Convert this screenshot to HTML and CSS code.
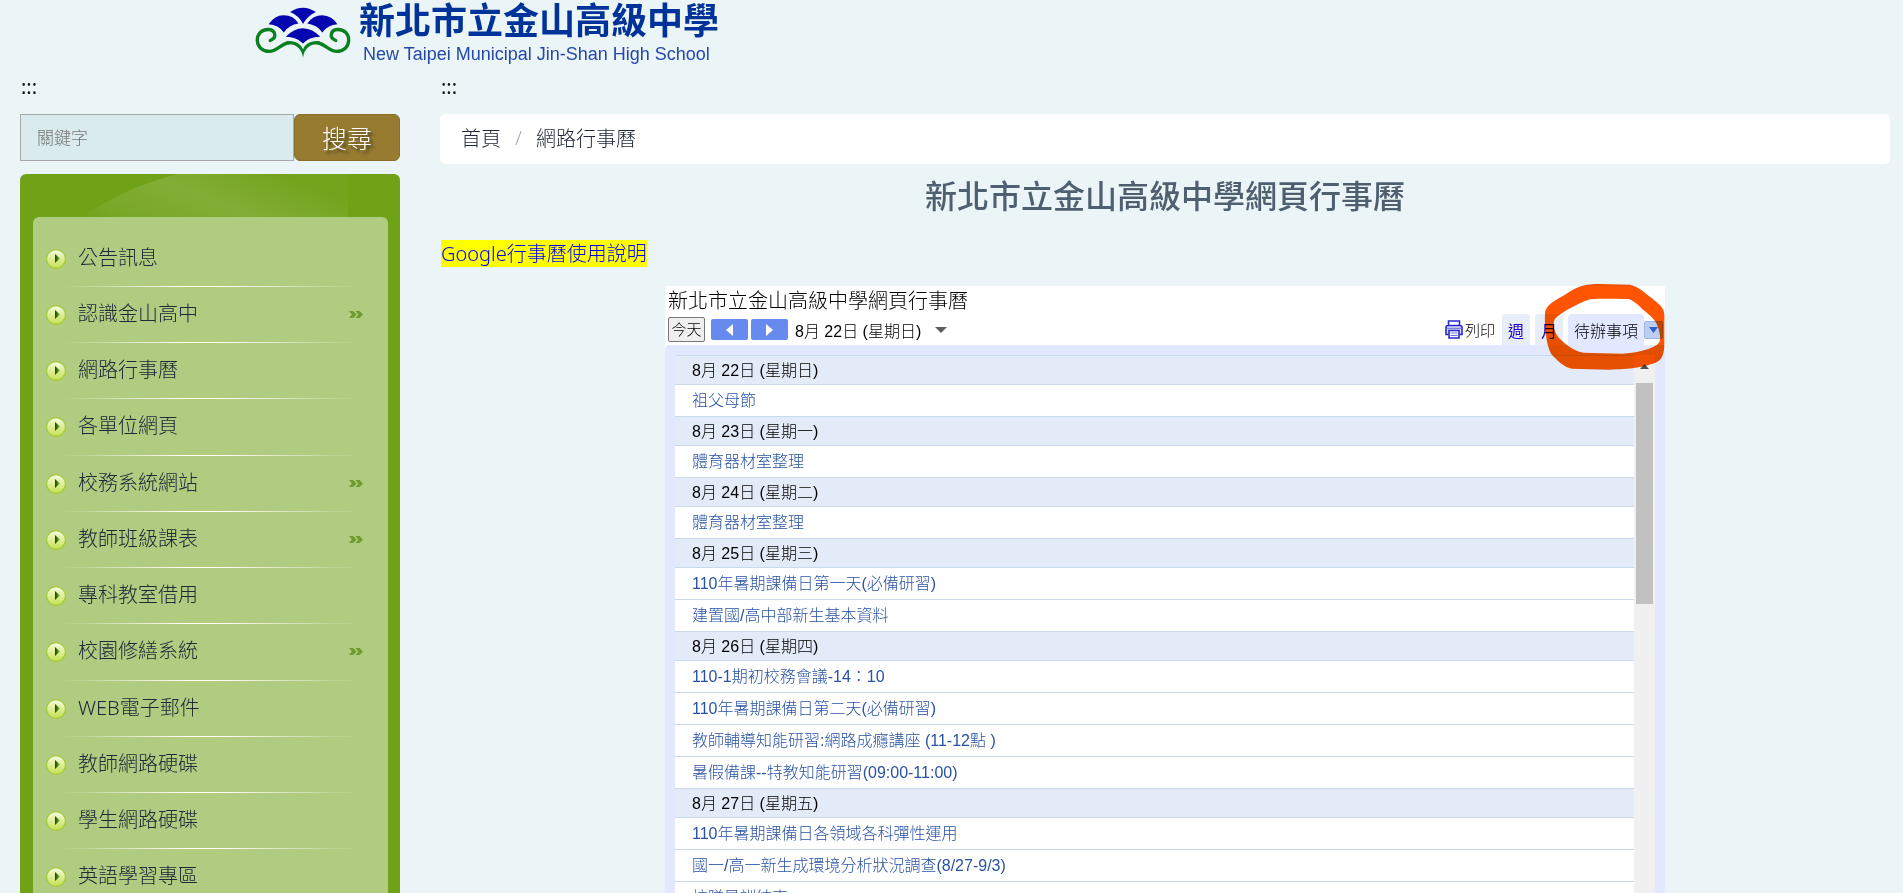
FILE: index.html
```html
<!DOCTYPE html>
<html lang="zh-Hant">
<head>
<meta charset="utf-8">
<title>新北市立金山高級中學網頁行事曆</title>
<link rel="stylesheet" href="styles.css">
</head>
<body>
<svg width="0" height="0" class="defs" aria-hidden="true">
  <defs>
    <linearGradient id="ball" x1="0" y1="0" x2="0" y2="1"><stop offset="0" stop-color="#f6fbe6"/><stop offset=".5" stop-color="#dcee96"/><stop offset="1" stop-color="#c6e04e"/></linearGradient>
    <linearGradient id="tri" x1="0" y1="0" x2="1" y2="0"><stop offset="0" stop-color="#1f4206"/><stop offset=".4" stop-color="#3f7410"/><stop offset="1" stop-color="#9cc24a"/></linearGradient>
    <symbol id="bullet" viewBox="0 0 20 20"><circle cx="10" cy="10" r="9.4" fill="url(#ball)" stroke="#a5c935" stroke-width="1.2"/><path d="M9 5v9l5-4.5z" fill="url(#tri)"/></symbol>
    <symbol id="more" viewBox="0 0 14 8"><path d="M0 0h4l3.600 3.500L4 7H0l3-3.500zM6.500 0h4L14 3.500 10.500 7h-4l3-3.500z" fill="#6f9a2d"/></symbol>
  </defs>
</svg>
<header class="header">
  <a class="brand" href="#">
    <svg class="brand-mark" viewBox="44 22 288 154" aria-hidden="true">
      <g fill="#0606b0">
        <path d="M149 37Q187 11 227 37Q202 48 188 73Q176 48 149 37z"/>
        <path d="M84 74Q104 46 130 47Q160 47 174 72Q146 76 130 99Q114 75 84 74z"/>
        <path d="M201 72Q218 47 246 47Q276 48 292 74Q262 76 246 99Q232 77 201 72z"/>
        <path d="M136 112Q160 86 188 86Q218 87 240 112Q206 112 188 132Q168 112 136 112z"/>
      </g>
      <g fill="none" stroke="#0b8020" stroke-linecap="round">
        <path d="M89 123C110 116 106 92 84 90C62 89 49 105 50 124C52 145 67 156 86 156C110 156 122 132 146 130" stroke-width="10"/>
        <path d="M287 123C266 116 270 92 292 90C314 89 327 105 326 124C324 145 309 156 290 156C266 156 254 132 230 130" stroke-width="10"/>
      </g>
      <path d="M138 125C166 122 182 134 188 150C194 134 210 122 238 125L238 135C210 132 193 146 188 175C183 146 166 132 138 135z" fill="#0b8020"/>
    </svg>
    <span class="brand-text">
      <span class="brand-zh">新北市立金山高級中學</span>
      <span class="brand-en">New Taipei Municipal Jin-Shan High School</span>
    </span>
  </a>
</header>
<div class="layout">
  <aside class="sidebar">
    <a class="access" href="#">:::</a>
    <form class="search">
      <input class="search-box" type="text" placeholder="關鍵字" aria-label="關鍵字">
      <button class="search-btn" type="button">搜尋</button>
    </form>
    <nav class="menu">
      <svg class="menu-glow" viewBox="0 0 328 43" preserveAspectRatio="none" aria-hidden="true">
        <defs><linearGradient id="glow" x1="0" y1="1" x2="1" y2=".6"><stop offset="0" stop-color="#fff" stop-opacity="0"/><stop offset=".15" stop-color="#fff" stop-opacity=".06"/><stop offset=".55" stop-color="#fff" stop-opacity=".13"/><stop offset="1" stop-color="#fff" stop-opacity=".02"/></linearGradient></defs>
        <path d="M62 43Q108 12 158 0H328V43z" fill="url(#glow)"/>
      </svg>
      <ul class="menu-list">
        <li><a href="#"><svg class="bullet"><use href="#bullet"/></svg><span>公告訊息</span></a></li>
        <li><a href="#"><svg class="bullet"><use href="#bullet"/></svg><span>認識金山高中</span><svg class="more"><use href="#more"/></svg></a></li>
        <li><a href="#"><svg class="bullet"><use href="#bullet"/></svg><span>網路行事曆</span></a></li>
        <li><a href="#"><svg class="bullet"><use href="#bullet"/></svg><span>各單位網頁</span></a></li>
        <li><a href="#"><svg class="bullet"><use href="#bullet"/></svg><span>校務系統網站</span><svg class="more"><use href="#more"/></svg></a></li>
        <li><a href="#"><svg class="bullet"><use href="#bullet"/></svg><span>教師班級課表</span><svg class="more"><use href="#more"/></svg></a></li>
        <li><a href="#"><svg class="bullet"><use href="#bullet"/></svg><span>專科教室借用</span></a></li>
        <li><a href="#"><svg class="bullet"><use href="#bullet"/></svg><span>校園修繕系統</span><svg class="more"><use href="#more"/></svg></a></li>
        <li><a href="#"><svg class="bullet"><use href="#bullet"/></svg><span>WEB電子郵件</span></a></li>
        <li><a href="#"><svg class="bullet"><use href="#bullet"/></svg><span>教師網路硬碟</span></a></li>
        <li><a href="#"><svg class="bullet"><use href="#bullet"/></svg><span>學生網路硬碟</span></a></li>
        <li><a href="#"><svg class="bullet"><use href="#bullet"/></svg><span>英語學習專區</span></a></li>
      </ul>
    </nav>
  </aside>
  <main class="main">
    <a class="access" href="#">:::</a>
    <nav class="crumbs">
      <a href="#">首頁</a><span class="crumb-sep">/</span><a href="#">網路行事曆</a>
    </nav>
    <h1 class="title">新北市立金山高級中學網頁行事曆</h1>
    <p class="guide"><a href="#">Google行事曆使用說明</a></p>
    <section class="calendar">
      <h2 class="cal-title">新北市立金山高級中學網頁行事曆</h2>
      <div class="toolbar">
        <button class="today" type="button">今天</button>
        <button class="step" type="button" aria-label="上一頁"><svg viewBox="0 0 7 12"><path d="M7 0v12L0 6z"/></svg></button>
        <button class="step" type="button" aria-label="下一頁"><svg viewBox="0 0 7 12"><path d="M0 0v12l7-6z"/></svg></button>
        <span class="cal-date">8月 22日 (星期日)</span>
        <svg class="date-arrow" viewBox="0 0 12 6" aria-hidden="true"><path d="M0 0h12L6 6z" fill="#5c605d"/></svg>
        <a class="print" href="#">
          <svg viewBox="0 0 18 19" aria-hidden="true" fill="none" stroke="#2828c8" stroke-width="1.600"><path d="M3.500 5V1h11v4"/><path d="M3.500 14.500H1V7.500Q1 5.500 3 5.500H15Q17 5.500 17 7.500V14.500H14.500" fill="#d5d8fa"/><path d="M4 10.500h10V18H4z" fill="#fff"/><path d="M5.500 13h7M5.500 15.500h7M1 8.300h16" stroke-width="1" stroke="#6a6ae0"/></svg>
          <span>列印</span>
        </a>
        <div class="tabs">
          <a class="tab" href="#">週</a>
          <a class="tab" href="#">月</a>
          <a class="tab tab-active" href="#">待辦事項</a>
          <button class="tab-menu" type="button" aria-label="更多"><svg viewBox="0 0 9 6"><path d="M0 0h9L4.500 6z" fill="#2c5fd0"/></svg></button>
        </div>
      </div>
      <div class="panel">
        <div class="agenda">
          <h3>8月 22日 (星期日)</h3>
          <a href="#">祖父母節</a>
          <h3>8月 23日 (星期一)</h3>
          <a href="#">體育器材室整理</a>
          <h3>8月 24日 (星期二)</h3>
          <a href="#">體育器材室整理</a>
          <h3>8月 25日 (星期三)</h3>
          <a href="#">110年暑期課備日第一天(必備研習)</a>
          <a href="#">建置國/高中部新生基本資料</a>
          <h3>8月 26日 (星期四)</h3>
          <a href="#">110-1期初校務會議-14：10</a>
          <a href="#">110年暑期課備日第二天(必備研習)</a>
          <a href="#">教師輔導知能研習:網路成癮講座 (11-12點 )</a>
          <a href="#">暑假備課--特教知能研習(09:00-11:00)</a>
          <h3>8月 27日 (星期五)</h3>
          <a href="#">110年暑期課備日各領域各科彈性運用</a>
          <a href="#">國一/高一新生成環境分析狀況調查(8/27-9/3)</a>
          <a href="#">校隊暑訓結束</a>
        </div>
        <div class="scrollbar" aria-hidden="true">
          <svg viewBox="0 0 9 5"><path d="M0 5h9L4.500 0z" fill="#505050"/></svg>
          <div class="thumb"></div>
        </div>
      </div>
      <svg class="marker" viewBox="0 0 405 294" aria-hidden="true">
        <path fill-rule="evenodd" fill="#ff5500" d="M30 105C32 84 52 70 90 50C128 24 150 18 195 18L285 20C312 26 330 45 350 60C372 78 388 90 388 110V200C387 236 378 250 350 258C320 268 290 273 220 275L110 272C84 266 66 246 48 227C34 200 28 150 30 105zM60 122C82 100 130 76 160 65C180 61 240 63 280 63C300 68 318 90 330 100C350 116 364 130 370 150C376 175 380 190 366 200C340 217 300 224 262 227L145 224C112 218 88 196 72 180C56 160 52 136 60 122z"/>
      </svg>
    </section>
  </main>
</div>
</body>
</html>
```
FILE: styles.css
```css
* { box-sizing: border-box; }

body {
  margin: 0;
  height: 100vh;
  overflow: hidden;
  background: #ebf4f6;
  color: #212838;
  font-family: "Noto Sans", "Noto Sans CJK TC", sans-serif;
  font-size: 20px;
  font-weight: 300;
}

a { color: inherit; text-decoration: none; }
button, input { font: inherit; }
h1, h2, h3, p, ul { margin: 0; padding: 0; }
svg { display: block; }
.defs { position: absolute; }

.header { padding: 0 255px; height: 73px; }
.brand { display: inline-flex; gap: 8px; }
.brand-mark { width: 96px; height: 51px; margin-top: 7px; }
.brand-text { display: flex; flex-direction: column; white-space: nowrap; }
.brand-zh { color: #039; font-size: 36px; font-weight: 700; line-height: 42px; }
.brand-en {
  color: #2348a8;
  padding-left: 4px;
  font: 400 18px/24px "Liberation Sans", sans-serif;
}

.layout { display: grid; grid-template-columns: 420px minmax(0, 1fr); }
.sidebar { padding: 0 20px; }
.main { padding: 0 13px 0 20px; }
.access { display: block; height: 41px; padding-left: 1px; color: #111; font-weight: 400; line-height: 28px; }

.search { display: flex; height: 47px; margin-bottom: 13px; }
.search-box {
  flex: 1;
  min-width: 0;
  border: 1px solid #a9a9a9;
  border-radius: 0;
  background: #d9ebef;
  padding: 0 16px;
  font-size: 17px;
}
.search-box::placeholder { color: #757575; }
.search-btn {
  width: 106px;
  padding: 0;
  border: 1px solid #8a6d27;
  border-radius: 6px;
  background: #967b31;
  color: #fff;
  font-size: 25px;
  font-weight: 300;
  line-height: 32px;
  text-shadow: 3px 3px 3px rgba(0, 0, 0, .5);
}

.menu {
  position: relative;
  padding: 43px 12px 0 13px;
  border-radius: 6px 6px 0 0;
  background: #70a218;
}
.menu-glow { position: absolute; left: 0; top: 0; width: 328px; height: 43px; }
.menu-list {
  list-style: none;
  min-height: 700px;
  padding: 14px 30px 0 13px;
  border-radius: 6px 6px 0 0;
  background: #b0cc80;
}
.menu-list li {
  background: linear-gradient(90deg, transparent 5%, #fff 45%, #fff 55%, transparent) 0 100% / 100% 1px no-repeat;
}
.menu-list li:nth-child(4n) { padding-bottom: 1px; }
.menu-list a { display: flex; align-items: center; height: 56px; }
.menu-list span { flex: 1; margin-left: 12px; line-height: 28px; padding-bottom: 2px; }
.bullet { width: 20px; height: 20px; }
.more { width: 14px; height: 8px; margin-right: -5px; }

.crumbs {
  display: flex;
  align-items: center;
  height: 50px;
  padding: 0 21px 4px;
  border-radius: 5px;
  background: #fff;
}
.crumb-sep { margin: 0 14px; color: #aaa; }
.title {
  margin-top: 7px;
  color: #4e5f70;
  font-size: 32px;
  font-weight: 500;
  line-height: 50px;
  text-align: center;
}
.guide { margin: 19px 0 19px 1px; line-height: 27px; }
.guide a { display: inline-block; background: #ff0; color: #00f; }

.calendar {
  position: relative;
  max-width: 1000px;
  margin: 0 auto;
  background: #fff;
  color: #000;
  font-family: "Liberation Sans", "Noto Sans CJK TC", sans-serif;
  font-size: 16px;
}
.cal-title { padding: 2px 0 0 3px; font-size: 20px; font-weight: 300; line-height: 26px; }
.toolbar { display: flex; align-items: center; height: 31px; padding-left: 3px; }
.today {
  height: 25px;
  width: 37px;
  margin-right: 6px;
  padding: 0;
  border: 1px solid #767676;
  border-radius: 2px;
  background: #efefef;
  font-size: 15px;
  line-height: 20px;
}
.step {
  display: flex;
  align-items: center;
  justify-content: center;
  width: 37px;
  height: 21px;
  margin-right: 3px;
  padding: 0;
  border: 0;
  border-radius: 2px;
  background: #668aee;
}
.step svg { width: 7px; height: 12px; fill: #fff; }
.cal-date { margin: 0 14px 0 4px; }
.date-arrow { width: 12px; height: 6px; }
.print { display: flex; align-items: center; gap: 2px; margin-left: auto; font-size: 15px; }
.print svg { width: 18px; height: 19px; }
.tabs { display: flex; align-items: flex-end; align-self: stretch; margin-left: 7px; padding-right: 2px; }
.tab {
  height: 31px;
  margin-right: 5px;
  padding: 0 6px;
  border-radius: 4px 4px 0 0;
  background: #e8eef7;
  color: #20c;
  font-size: 16px;
  font-weight: 400;
  line-height: 36px;
}
.tab-active { margin-right: 0; background: #e2e8ff; color: #000; font-weight: 300; }
.tab-menu {
  display: flex;
  align-items: center;
  justify-content: center;
  align-self: center;
  width: 19px;
  height: 18px;
  padding: 0;
  border: 1px solid #9db8e8;
  border-radius: 2px;
  background: #bccdf2;
}
.tab-menu svg { width: 9px; height: 6px; }

.panel { display: flex; padding: 10px; border-radius: 4px 0 0 0; background: #e2e8ff; }
.agenda { flex: 1; background: #fff; }
.agenda h3, .agenda a {
  display: block;
  border-top: 1px solid #c8daec;
  padding-left: 17px;
  font-size: 16px;
  font-weight: 300;
}
.agenda h3 { background: #e4ebf8; height: 29px; line-height: 29px; }
.agenda a { height: 32px; color: #2952a3; line-height: 32px; }
.scrollbar { width: 21px; padding: 9px 2px 0; background: #f0f0f0; }
.scrollbar svg { width: 9px; height: 5px; margin: 0 auto 14px; }
.thumb { height: 221px; background: #c1c1c1; }

.marker {
  position: absolute;
  top: -8px;
  right: -5px;
  width: 135px;
  height: 98px;
  mix-blend-mode: multiply;
  pointer-events: none;
}
```
